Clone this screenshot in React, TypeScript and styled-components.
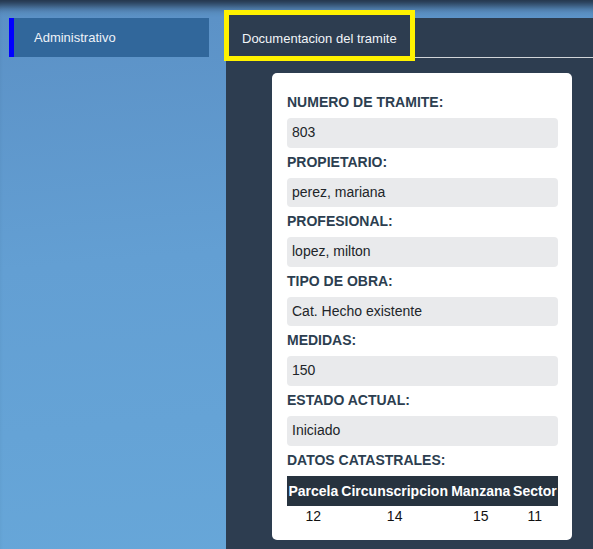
import React from "react";
import styled, { createGlobalStyle } from "styled-components";

const Global = createGlobalStyle`
  html, body { margin: 0; padding: 0; }
  body { font-family: "Liberation Sans", Arial, Helvetica, sans-serif; }
  * { box-sizing: border-box; }
`;

const Page = styled.div`
  display: grid;
  grid-template-columns: 226px 1fr;
  min-height: 549px;
  background: linear-gradient(175deg, #5b90c5 0%, #639fd3 45%, #67a7d9 100%);
  box-shadow: inset 0 14px 10px -8px rgba(30, 42, 60, 0.95);
`;

const Sidebar = styled.nav`
  padding-top: 18px;
`;

const SideItem = styled.div<{ $active?: boolean }>`
  display: flex;
  align-items: center;
  margin-left: 9px;
  width: 200px;
  height: 39px;
  padding-left: 20px;
  background: #31679b;
  border-left: 5px solid ${(p) => (p.$active ? "#0000ff" : "transparent")};
  color: #eef2f8;
  font-size: 13px;
`;

const Panel = styled.main`
  margin-top: 18px;
  background: #2d3d50;
  min-height: 531px;
`;

const Tabs = styled.div`
  display: flex;
  height: 40px;
  border-bottom: 1px solid #d0d4d8;
`;

const Tab = styled.div`
  position: relative;
  z-index: 1;
  margin-left: 3px;
  margin-top: -3px;
  height: 41px;
  padding: 16px 13px 0;
  background: #2d3d50;
  color: #f1f4f8;
  font-size: 13px;
  outline: 5px solid #fff200;
`;

const Card = styled.section`
  width: 300px;
  margin: 15px 0 10px 46px;
  padding: 15px 14px 14px 15px;
  background: #ffffff;
  border-radius: 5px;
`;

const Label = styled.div`
  height: 30px;
  line-height: 28px;
  font-size: 14px;
  font-weight: bold;
  color: #2c3e50;
`;

const Field = styled.div`
  height: 29.6px;
  line-height: 29.6px;
  padding-left: 5px;
  background: #e9eaec;
  border-radius: 4px;
  font-size: 14px;
  color: #212529;
`;

const Table = styled.table`
  width: 100%;
  border-collapse: collapse;
  font-size: 14px;
`;

const HeadCell = styled.th`
  height: 30px;
  padding: 0 1px;
  background: #27333f;
  color: #ffffff;
  font-weight: bold;
  text-align: center;
`;

const Cell = styled.td`
  height: 20px;
  padding: 0 1px;
  text-align: center;
  color: #111;
`;

const fields: [string, string][] = [
  ["NUMERO DE TRAMITE:", "803"],
  ["PROPIETARIO:", "perez, mariana"],
  ["PROFESIONAL:", "lopez, milton"],
  ["TIPO DE OBRA:", "Cat. Hecho existente"],
  ["MEDIDAS:", "150"],
  ["ESTADO ACTUAL:", "Iniciado"],
];

export default function App() {
  return (
    <>
      <Global />
      <Page>
        <Sidebar>
          <SideItem $active>Administrativo</SideItem>
        </Sidebar>
        <Panel>
          <Tabs>
            <Tab>Documentacion del tramite</Tab>
          </Tabs>
          <Card>
            {fields.map(([l, v]) => (
              <React.Fragment key={l}>
                <Label>{l}</Label>
                <Field>{v}</Field>
              </React.Fragment>
            ))}
            <Label>DATOS CATASTRALES:</Label>
            <Table>
              <thead>
                <tr>
                  <HeadCell>Parcela</HeadCell>
                  <HeadCell>Circunscripcion</HeadCell>
                  <HeadCell>Manzana</HeadCell>
                  <HeadCell>Sector</HeadCell>
                </tr>
              </thead>
              <tbody>
                <tr>
                  <Cell>12</Cell>
                  <Cell>14</Cell>
                  <Cell>15</Cell>
                  <Cell>11</Cell>
                </tr>
              </tbody>
            </Table>
          </Card>
        </Panel>
      </Page>
    </>
  );
}
